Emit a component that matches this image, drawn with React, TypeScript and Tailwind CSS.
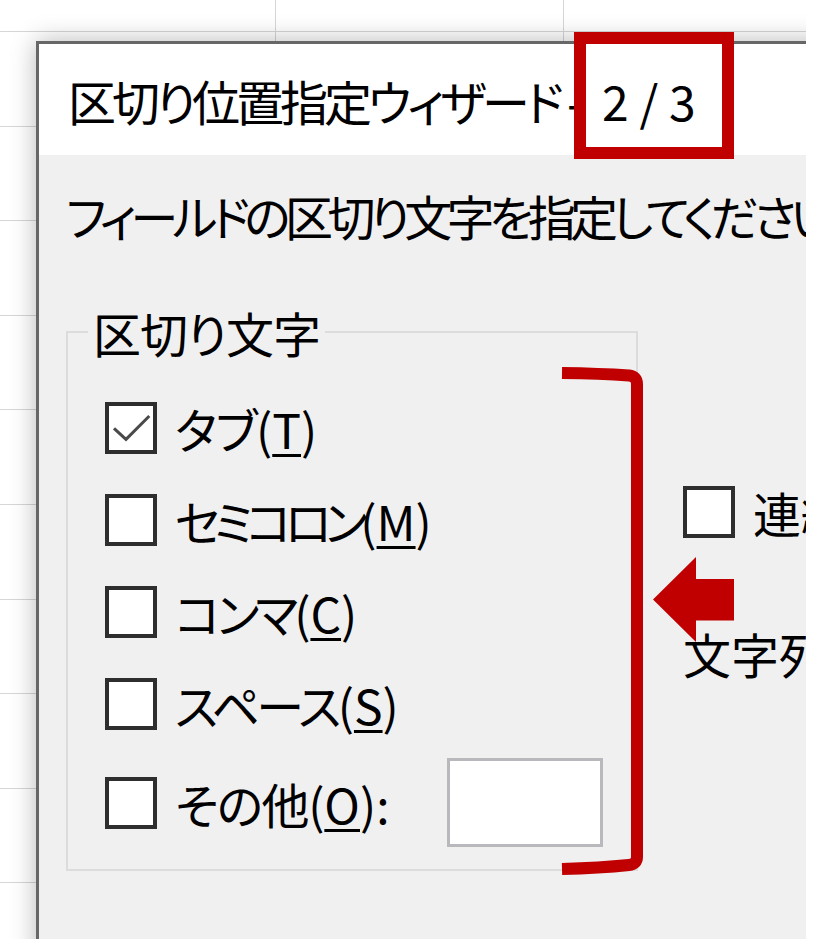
import React from 'react';

// Excel "区切り位置指定ウィザード" step 2, zoomed 4x, with red annotations on top.

const RED = '#c00000';

function CheckBox({ checked = false }: { checked?: boolean }) {
  return (
    <span className="relative flex h-[52px] w-[52px] shrink-0 border-[4px] border-[#2e2e2e] bg-white">
      {checked && (
        <svg className="absolute inset-0" width="44" height="44" viewBox="0 0 44 44" fill="none">
          <path d="M5 22.3 L17 33.3 L40.3 10" stroke="#4a4a4a" strokeWidth="3" />
        </svg>
      )}
    </span>
  );
}

function Key({ k }: { k: string }) {
  return <span className="underline decoration-[3px] underline-offset-[5px]">{k}</span>;
}

// tracking only on the kana part: Meiryo UI kana are narrower than Noto's
function Option({ label, k, checked, tracking }: { label: string; k: string; checked?: boolean; tracking: string }) {
  return (
    <div className="flex h-[52px] items-center gap-[18px]">
      <CheckBox checked={checked} />
      <span className="whitespace-nowrap text-[48px] leading-[52px]">
        <span className={tracking}>{label}</span>(<Key k={k} />)
      </span>
    </div>
  );
}

export default function App() {
  return (
    <div className="relative h-[952px] w-[813px] overflow-hidden bg-white font-['Noto_Sans_CJK_JP','Noto_Sans_CJK_SC',sans-serif] text-black [font-feature-settings:'palt']">
      {/* spreadsheet behind the dialog */}
      <div className="h-[939px] w-[806px] overflow-hidden bg-white pl-[36px] pt-[41px] [background-image:repeating-linear-gradient(to_bottom,transparent_0_31px,#d6d6d6_31px_32px,transparent_32px_94.6px),repeating-linear-gradient(to_right,transparent_0_275px,#d6d6d6_275px_276px,transparent_276px_288px)]">
        {/* dialog */}
        <div className="h-[920px] w-[800px] border-l-[3px] border-t-[3px] border-[#676767] bg-[#f0f0f0] shadow-[0_0_24px_rgba(0,0,0,0.28)]">
          {/* title bar */}
          <div className="flex h-[111px] items-center whitespace-nowrap bg-white pl-[29px] text-[48px] leading-[56px]">
            <span className="w-[499px] tracking-[-4px]">区切り位置指定ウィザード</span>
            <span className="w-[35px]">-</span>
            <span>2 / 3</span>
          </div>

          {/* body */}
          <div className="pl-[27px]">
            <p className="mt-[32px] whitespace-nowrap text-[48px] leading-[56px] tracking-[-5.6px]">
              フィールドの区切り文字を指定してください。
            </p>

            <div className="mt-[61px] flex">
              <fieldset className="w-[572px] shrink-0 border-2 border-[#dcdcdc] pb-[22px]">
                <legend className="ml-[20px] px-[5px] text-[48px] leading-[56px] tracking-[-1px]">区切り文字</legend>
                <div className="pl-[37px]">
                  <div className="mt-[42px] flex flex-col gap-[40px]">
                    <Option label="タブ" k="T" checked tracking="tracking-[-1.5px]" />
                    <Option label="セミコロン" k="M" tracking="tracking-[-7px]" />
                    <Option label="コンマ" k="C" tracking="tracking-[-4px]" />
                    <Option label="スペース" k="S" tracking="tracking-[-3.5px]" />
                  </div>
                  <div className="mt-[28px] flex w-[498px] items-center">
                    <div className="flex items-center gap-[18px]">
                      <CheckBox />
                      <span className="whitespace-nowrap text-[48px] leading-[52px]">
                        <span className="tracking-[-1.5px]">その他</span>(<Key k="O" />):
                      </span>
                    </div>
                    <div className="ml-auto h-[89px] w-[156px] border-[3px] border-[#b9b9bd] bg-white" />
                  </div>
                </div>
              </fieldset>

              <div className="ml-[45px] flex flex-col whitespace-nowrap pt-[182px]">
                <div className="flex items-center gap-[18px]">
                  <CheckBox />
                  <span className="text-[48px] leading-[52px]">連続した区切り文字は 1 文字として扱う(<Key k="R" />)</span>
                </div>
                <p className="mt-[87px] text-[48px] leading-[56px]">
                  文字列の引用符(<Key k="Q" />):
                </p>
              </div>
            </div>
          </div>
        </div>
      </div>

      {/* red annotations */}
      <svg
        className="pointer-events-none absolute inset-0"
        width="813"
        height="952"
        viewBox="0 0 813 952"
        fill="none"
      >
        <rect x="580" y="38" width="148" height="115" stroke={RED} strokeWidth="12" />
        <path
          d="M562 373 Q600 373.5 629 375.5 Q637 376.5 637 384 L637 857 Q637 864 629 865 Q600 868 562 869"
          stroke={RED}
          strokeWidth="12"
        />
        <polygon points="653,599.5 696,557 696,579 734,579 734,620.5 696,620.5 696,642" fill={RED} />
      </svg>
    </div>
  );
}
